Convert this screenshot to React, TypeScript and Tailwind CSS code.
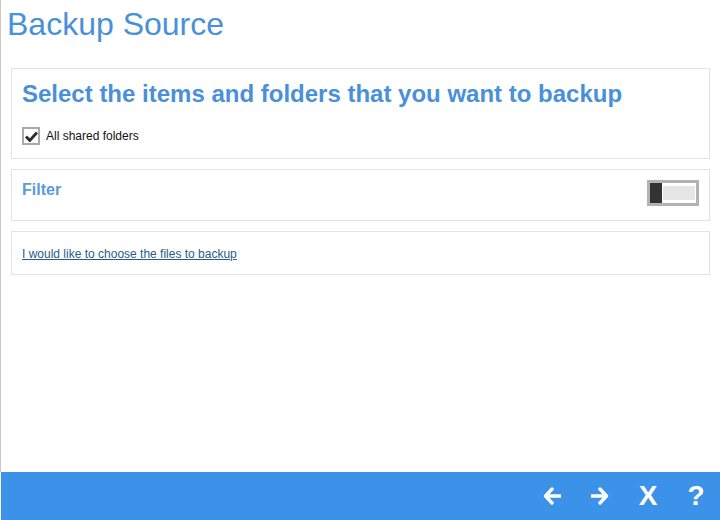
import React from 'react';

// Small bold arrow used in the footer navigation
function Arrow({ dir }: { dir: 'left' | 'right' }) {
  const d = dir === 'left' ? 'M17 9H3M9 2L2.5 9L9 16' : 'M1 9H15M9 2L15.5 9L9 16';
  return (
    <svg width="18" height="18" viewBox="0 0 18 18" fill="none">
      <path d={d} stroke="white" strokeWidth="3.4" strokeLinecap="round" strokeLinejoin="round" />
    </svg>
  );
}

function Toggle() {
  return (
    <div className="flex h-[26px] w-[52px] items-center border-[3px] border-[#b3b3b3] bg-white">
      <div className="h-full w-[12px] bg-[#333333]" />
      <div className="ml-[1px] h-[14px] w-[32px] bg-[#e6e6e6]" />
    </div>
  );
}

export default function App() {
  return (
    <div className="flex h-[520px] w-[720px] flex-col bg-white font-['Liberation_Sans',Arial,sans-serif]">
      <div className="flex-1 border-l border-[#c8c8c8]">
        <h1 className="pl-[6px] pt-[5px] text-[32px] leading-[38px] text-[#4a90d9]">Backup Source</h1>

        <div className="mx-[10px] mt-[25px] space-y-[10px]">
          <div className="h-[91px] border border-[#e3e3e3] px-[10px] pt-[10px]">
            <h2 className="text-[24px] font-bold leading-[30px] text-[#4a90d9]">
              Select the items and folders that you want to backup
            </h2>
            <label className="mt-[18px] flex items-center gap-[6px]">
              <span className="flex h-[18px] w-[18px] items-center justify-center border-2 border-[#a9a9a9] bg-white">
                <svg width="13" height="11" viewBox="0 0 13 11">
                  <path d="M1 5.5L4.8 9.5L12 1.5" stroke="#2b2b2b" strokeWidth="2.8" fill="none" />
                </svg>
              </span>
              <span className="text-[12px] text-[#111]">All shared folders</span>
            </label>
          </div>

          <div className="flex h-[52px] items-start justify-between border border-[#e3e3e3] pl-[10px] pr-[10px] pt-[10px]">
            <span className="text-[16px] font-bold leading-[20px] text-[#5a9ad8]">Filter</span>
            <Toggle />
          </div>

          <div className="h-[44px] border border-[#e3e3e3] px-[10px] pt-[9px]">
            <a href="#" className="text-[12px] leading-[16px] text-[#285c88] underline">
              I would like to choose the files to backup
            </a>
          </div>
        </div>
      </div>

      <div className="ml-[1px] flex h-[48px] items-center justify-end bg-[#3c92e9]">
        <div className="flex w-[48px] justify-center"><Arrow dir="left" /></div>
        <div className="flex w-[48px] justify-center"><Arrow dir="right" /></div>
        <div className="flex w-[48px] justify-center text-[28px] font-bold leading-none text-white">X</div>
        <div className="flex w-[48px] justify-center text-[28px] font-bold leading-none text-white">?</div>
      </div>
    </div>
  );
}
